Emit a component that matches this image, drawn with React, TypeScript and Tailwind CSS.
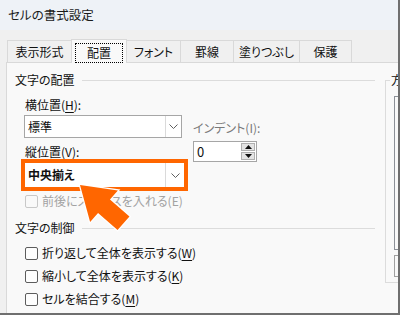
import React from "react";

function GroupHeader({ label }: { label: string }) {
  return (
    <div className="flex items-center h-[16px]">
      <span className="leading-[16px] whitespace-nowrap">{label}</span>
      <div className="flex-1 h-px bg-[#dcdcdc] ml-[7px]" />
    </div>
  );
}

function Chevron() {
  return (
    <svg width="9" height="5" viewBox="0 0 9 5">
      <polyline points="0.5,0.5 4.5,4.5 8.5,0.5" fill="none" stroke="#606060" strokeWidth="1" />
    </svg>
  );
}

function CheckRow({ children, disabled }: { children: React.ReactNode; disabled?: boolean }) {
  return (
    <div className="flex items-center h-[16px] whitespace-nowrap">
      <div
        className={
          disabled
            ? "shrink-0 w-[13px] h-[13px] rounded-[2px] border border-[#c8c8c8] bg-[#f9f9f9]"
            : "shrink-0 w-[13px] h-[13px] rounded-[2px] border border-[#5c5c5c] bg-[#fdfdfd]"
        }
      />
      <span className={disabled ? "ml-[4px] leading-[16px] text-[#a2a2a2]" : "ml-[4px] leading-[16px]"}>
        {children}
      </span>
    </div>
  );
}

export default function App() {
  return (
    <div className="relative w-[400px] h-[315px] overflow-hidden bg-[#f0f0f0] border-r-2 border-b-2 border-[#6f6f6f] text-[12px] text-[#111] font-['Noto_Sans_CJK_JP','Noto_Sans_CJK_SC',sans-serif] [font-feature-settings:'palt'] flex flex-col">
      {/* title bar */}
      <div className="h-[30px] shrink-0 bg-[#eef2f7] flex items-center pl-[8px] text-[12.5px] text-[#1a1a1a]">
        セルの書式設定
      </div>

      <div className="flex-1 flex flex-col pl-[6px]">
        {/* tabs */}
        <div className="h-[32px] shrink-0 flex items-end pl-[1px]">
          <div className="w-[64px] h-[22px] border-l border-t border-[#d9d9d9] flex items-center justify-center">
            表示形式
          </div>
          <div className="relative z-10 w-[56px] h-[24px] -mb-px bg-[#f9f9f9] border-l border-t border-r border-[#d9d9d9] pt-[3px] px-[3px]">
            <div className="h-full border border-dotted border-black flex items-center justify-center pb-px">
              配置
            </div>
          </div>
          <div className="w-[53px] h-[22px] border-t border-[#d9d9d9] flex items-center justify-center">
            フォント
          </div>
          <div className="w-[53px] h-[22px] border-l border-t border-[#d9d9d9] flex items-center justify-center">
            罫線
          </div>
          <div className="w-[66px] h-[22px] border-l border-t border-[#d9d9d9] flex items-center justify-center">
            塗りつぶし
          </div>
          <div className="w-[53px] h-[22px] border-l border-t border-r border-[#d9d9d9] flex items-center justify-center">
            保護
          </div>
        </div>

        {/* panel */}
        <div className="flex-1 bg-[#f9f9f9] border-l border-t border-[#d9d9d9] flex pl-[8px] pt-[9px]">
          <div className="w-[360px] shrink-0 flex flex-col">
            <GroupHeader label="文字の配置" />
            <div className="flex mt-[9px]">
              <div className="ml-[9px] w-[158px] shrink-0 flex flex-col">
                <div className="h-[16px] leading-[16px] pl-[1px]">
                  横位置(<span className="underline underline-offset-2">H</span>):
                </div>
                <div className="mt-[2px] h-[23px] border border-[#a6a6a6] bg-white flex">
                  <div className="flex-1 flex items-center pl-[3px]">標準</div>
                  <div className="w-[16px] border-l border-[#dadada] flex items-center justify-center">
                    <Chevron />
                  </div>
                </div>
                <div className="mt-[6px] h-[16px] leading-[16px] pl-[1px]">
                  縦位置(<span className="underline underline-offset-2">V</span>):
                </div>
                <div className="-mt-[1px] -ml-[3px] w-[167px] h-[32px] border-[4px] border-[#ff6600] bg-white flex">
                  <div className="flex-1 flex items-center pl-[3px] font-semibold">中央揃え</div>
                  <div className="w-[19px] border-l border-[#dadada] flex items-center justify-center">
                    <Chevron />
                  </div>
                </div>
                <div className="mt-[2px] pl-[1px]">
                  <CheckRow disabled>前後にスペースを入れる(E)</CheckRow>
                </div>
              </div>
              <div className="ml-[11px] mt-[23px] flex flex-col">
                <div className="h-[16px] leading-[16px] text-[#7a7a7a] whitespace-nowrap">インデント(I):</div>
                <div className="mt-[5px] w-[64px] h-[21px] border border-[#a6a6a6] bg-white flex">
                  <div className="flex-1 flex items-center pl-[3px] text-[13px]">0</div>
                  <div className="w-[15px] flex flex-col gap-px py-px pr-px">
                    <div className="flex-1 bg-[#e4e4e4] border border-[#b0b0b0] flex items-center justify-center">
                      <svg width="7" height="4" viewBox="0 0 7 4">
                        <polygon points="3.5,0 7,4 0,4" fill="#111" />
                      </svg>
                    </div>
                    <div className="flex-1 bg-[#e4e4e4] border border-[#b0b0b0] flex items-center justify-center">
                      <svg width="7" height="4" viewBox="0 0 7 4">
                        <polygon points="0,0 7,0 3.5,4" fill="#111" />
                      </svg>
                    </div>
                  </div>
                </div>
              </div>
            </div>

            <div className="mt-[11px]">
              <GroupHeader label="文字の制御" />
            </div>
            <div className="mt-[9px] pl-[10px] flex flex-col gap-[7px]">
              <CheckRow>
                折り返して全体を表示する(<span className="underline underline-offset-2">W</span>)
              </CheckRow>
              <CheckRow>
                縮小して全体を表示する(<span className="underline underline-offset-2">K</span>)
              </CheckRow>
              <CheckRow>
                セルを結合する(<span className="underline underline-offset-2">M</span>)
              </CheckRow>
            </div>
          </div>

          {/* orientation group (partially visible) */}
          <div className="ml-[10px] mt-[8px] relative w-[40px] h-[203px] shrink-0 border-l border-t border-b border-[#dcdcdc] flex flex-col pl-[8px] pt-[15px]">
            <span className="absolute -top-[9px] left-[4px] px-[1px] bg-[#f9f9f9] leading-[16px] whitespace-nowrap">
              方向
            </span>
            <div className="h-[154px] border-l border-t border-b border-[#8c9097] bg-[#f9f9f9]" />
            <div className="mt-[5px] h-[22px] border-l border-t border-b border-[#a0a0a0] flex items-center pl-[3px]">
              <div className="w-[3px] h-[5px] rounded-full bg-[#f5a020]" />
            </div>
          </div>
        </div>
      </div>

      {/* orange arrow overlay */}
      <svg className="absolute left-0 top-0 pointer-events-none" width="400" height="315" viewBox="0 0 400 315">
        <polygon
          points="0,0 -32,-21 -32,-9 -58,-9 -58,9 -32,9 -32,21"
          transform="translate(80 185) rotate(-138.6)"
          fill="#ff6600"
          stroke="#ffffff"
          strokeWidth="2.5"
          strokeLinejoin="miter"
          paintOrder="stroke"
        />
      </svg>
    </div>
  );
}
